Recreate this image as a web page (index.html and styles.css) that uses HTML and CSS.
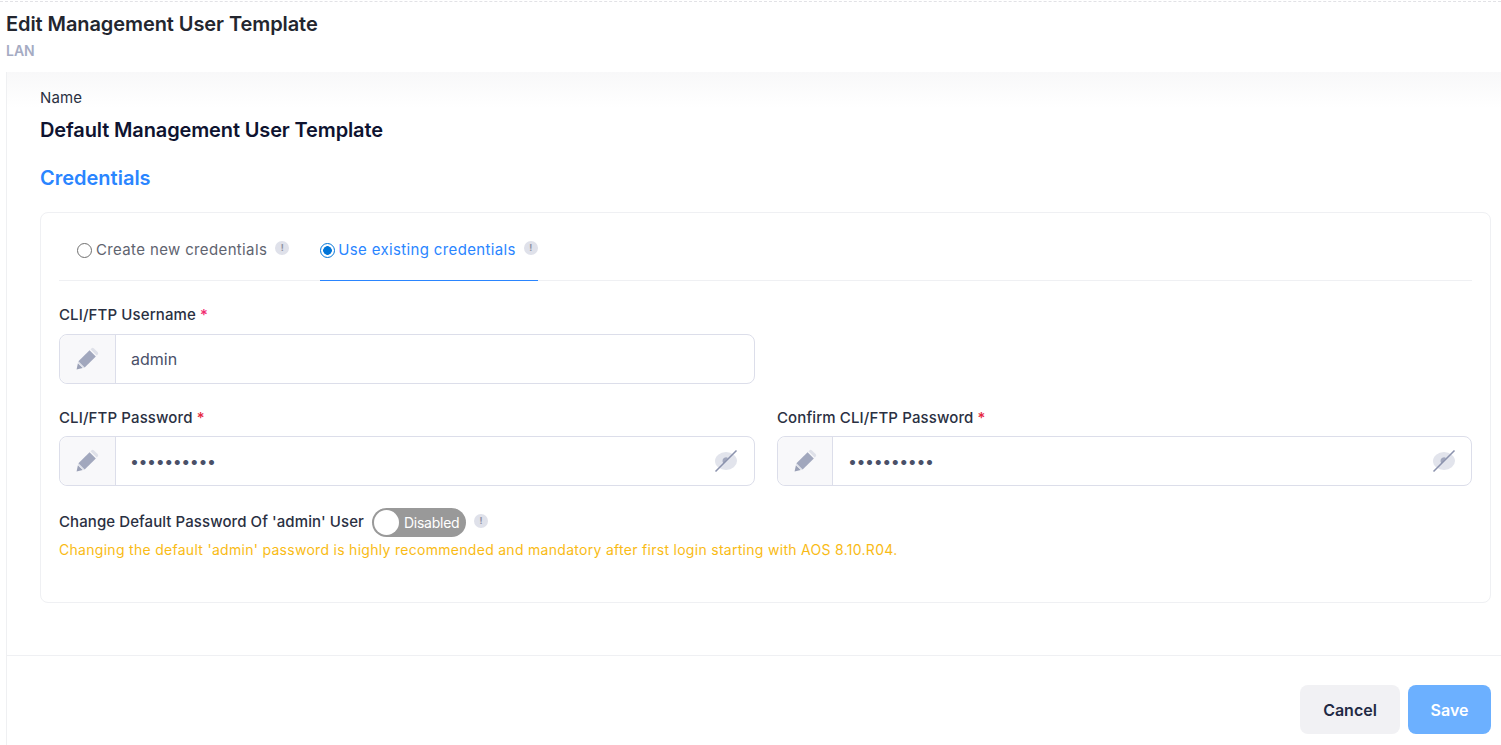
FILE: index.html
```html
<!DOCTYPE html>
<html lang="en">
<head>
<meta charset="utf-8">
<title>Edit Management User Template</title>
<link rel="stylesheet" href="styles.css">
</head>
<body>
<header class="page-head">
  <h1 class="page-title">Edit Management User Template</h1>
  <div class="page-sub">LAN</div>
</header>
<main class="panel">
  <div class="content">
    <div class="name-label">Name</div>
    <div class="name-value">Default Management User Template</div>
    <h2 class="section-title">Credentials</h2>
    <section class="card">
      <div class="tabs">
        <div class="tab">
          <span class="radio"></span><span class="tab-text">Create new credentials</span>
          <span class="info">!</span>
        </div>
        <div class="tab tab-active">
          <span class="radio radio-on"></span><span class="tab-text">Use existing credentials</span>
          <span class="info">!</span>
        </div>
      </div>
      <div class="field field-user">
        <label class="label">CLI/FTP Username <span class="req req-pink">*</span></label>
        <div class="input">
          <span class="addon"><svg class="pencil" viewBox="0 0 24 24"><path class="p-tip" d="M1.500 22.500l1.300-6 4.700 4.700z"/><path class="p-band" d="M2.800 16.500l.5-1.800 6 6-1.800.5z"/><path class="p-body" d="M3.300 14.700L14 4l6 6L9.300 20.700z"/><path class="p-end" d="M14.800 3.200l.9-.9a1.800 1.800 0 0 1 2.500 0l3.500 3.500a1.800 1.800 0 0 1 0 2.500l-.9.9z"/></svg></span>
          <span class="value">admin</span>
        </div>
      </div>
      <div class="row">
        <div class="field field-left">
          <label class="label">CLI/FTP Password <span class="req">*</span></label>
          <div class="input input-pass">
            <span class="addon"><svg class="pencil" viewBox="0 0 24 24"><path class="p-tip" d="M1.500 22.500l1.300-6 4.700 4.700z"/><path class="p-band" d="M2.800 16.500l.5-1.800 6 6-1.800.5z"/><path class="p-body" d="M3.300 14.700L14 4l6 6L9.300 20.700z"/><path class="p-end" d="M14.800 3.200l.9-.9a1.800 1.800 0 0 1 2.500 0l3.500 3.500a1.800 1.800 0 0 1 0 2.500l-.9.9z"/></svg></span>
            <span class="value dots">••••••••••</span>
            <svg class="eye" viewBox="0 0 24 24"><ellipse class="e-fill" cx="12" cy="12" rx="11" ry="9"/><path class="e-pupil" d="M8.500 12a3.500 3.500 0 0 1 5.500-3L9.500 14.500a3.500 3.500 0 0 1-1-2.500z"/><path class="e-line" d="M1.500 22.500L22.500 1.500"/></svg>
          </div>
        </div>
        <div class="field field-right">
          <label class="label">Confirm CLI/FTP Password <span class="req">*</span></label>
          <div class="input input-pass">
            <span class="addon"><svg class="pencil" viewBox="0 0 24 24"><path class="p-tip" d="M1.500 22.500l1.300-6 4.700 4.700z"/><path class="p-band" d="M2.800 16.500l.5-1.800 6 6-1.800.5z"/><path class="p-body" d="M3.300 14.700L14 4l6 6L9.300 20.700z"/><path class="p-end" d="M14.800 3.200l.9-.9a1.800 1.800 0 0 1 2.500 0l3.500 3.500a1.800 1.800 0 0 1 0 2.500l-.9.9z"/></svg></span>
            <span class="value dots">••••••••••</span>
            <svg class="eye" viewBox="0 0 24 24"><ellipse class="e-fill" cx="12" cy="12" rx="11" ry="9"/><path class="e-pupil" d="M8.500 12a3.500 3.500 0 0 1 5.500-3L9.500 14.500a3.500 3.500 0 0 1-1-2.500z"/><path class="e-line" d="M1.500 22.500L22.500 1.500"/></svg>
          </div>
        </div>
      </div>
      <div class="toggle-row">
        <span class="toggle-label">Change Default Password Of 'admin' User</span>
        <span class="toggle"><span class="knob"></span><span class="toggle-text">Disabled</span></span>
        <span class="info info-toggle">!</span>
      </div>
      <p class="warning">Changing the default 'admin' password is highly recommended and mandatory after first login starting with AOS 8.10.R04.</p>
    </section>
  </div>
  <footer class="actions">
    <button class="btn btn-cancel">Cancel</button>
    <button class="btn btn-save">Save</button>
  </footer>
</main>
</body>
</html>
```
FILE: styles.css
```css
* { box-sizing: border-box; }
html, body { margin: 0; padding: 0; height: 100%; overflow: hidden; }
body { font-family: Inter, "Liberation Sans", sans-serif; background: #fff; color: #1f2433; }

.page-head { height: 71px; padding: 12px 6px 0; border-top: 1px dashed #e2e2e6; margin-top: 1px; }
.page-title { margin: 0; font-size: 20px; line-height: 20px; font-weight: 600; letter-spacing: -.08px; color: #23262f; }
.page-sub { margin-top: 9px; font-size: 14px; line-height: 16px; font-weight: 600; color: #a5abc3; }

.panel { margin-left: 6px; height: 673px; border-left: 1px solid #eff0f2; display: flex; flex-direction: column;
  background: linear-gradient(#f8f8f9, #fff 36px); background-repeat: no-repeat; }
.content { padding: 16px 10px 0 33px; height: 584px; border-bottom: 1px solid #eff0f3; }
.name-label { font-size: 15px; line-height: 20px; color: #2a3042; letter-spacing: .1px; }
.name-value { margin-top: 10px; font-size: 20px; line-height: 24px; font-weight: 600; letter-spacing: -.13px; color: #0e1330; }
.section-title { margin: 24px 0 0; font-size: 20px; line-height: 24px; font-weight: 600; color: #2a85ff; }

.card { margin-top: 22px; height: 391px; border: 1px solid #eff0f3; border-radius: 8px; padding: 0 18px; background: #fff; }
.tabs { display: flex; height: 68px; border-bottom: 1px solid #eff0f3; padding-left: 18px; gap: 31px; }
.tab { display: flex; align-items: flex-start; padding-top: 27px; height: 68px; font-size: 15px; line-height: 20px; letter-spacing: .36px; color: #5f6470; }
.tab-active { color: #2a85ff; border-bottom: 1px solid #2a85ff; }
.tab-text { margin-left: 4px; }
.tab-active .tab-text { margin-left: 3px; }
.radio { width: 15px; height: 15px; border: 1px solid #6f6f6f; border-radius: 50%; margin-top: 3px; background: #fff; flex: none; }
.radio-on { border: 1.5px solid #0075d9; background: radial-gradient(circle, #0075d9 0 4px, #fff 4.600px); }
.info { display: inline-flex; align-items: center; justify-content: center; width: 14px; height: 14px; border-radius: 50%;
  background: #dfe1ea; color: #8f93a3; font-size: 9px; font-weight: 700; margin: 1px 0 0 8px; flex: none; letter-spacing: 0; }

.field { flex: 1 1 0; min-width: 0; }
.field-user { width: 696px; margin-top: 24px; }
.field-left { width: 696px; flex: none; }
.label { display: block; font-size: 15px; line-height: 20px; font-weight: 500; color: #2a3042; letter-spacing: .12px; }
.req { color: #e5273f; }
.req-pink { color: #f1296f; }
.input { display: flex; align-items: center; height: 50px; margin-top: 9px; border: 1px solid #dcdeea; border-radius: 8px; background: #fff; }
.input-pass { margin-top: 8px; }
.addon { display: flex; align-items: center; justify-content: center; width: 56px; height: 100%; flex: none; background: #f8f8fa;
  border-right: 1px solid #dcdeea; border-radius: 8px 0 0 8px; }
.field-right .addon { width: 55px; }
.pencil { width: 25px; height: 25px; margin-top: -2px; }
.p-tip { fill: #9aa0b6; }
.p-band { fill: #dfe1e9; }
.p-body { fill: #a1a7bd; }
.p-end { fill: #dfe1e9; }
.value { margin-left: 15px; flex: 1; font-size: 16px; line-height: 22px; color: #4a5068; }
.dots { margin-left: 14px; letter-spacing: -.45px; }
.field-right .dots { margin-left: 15px; }
.eye { width: 24px; height: 24px; margin-right: 16px; flex: none; }
.field-right .eye { margin-right: 15px; }
.e-fill { fill: #e2e4ec; }
.e-pupil { fill: #a1a7bd; }
.e-line { stroke: #8b92ad; stroke-width: 1.600; fill: none; }

.row { display: flex; gap: 22px; margin-top: 24px; }
.toggle-row { display: flex; align-items: center; margin-top: 21px; height: 30px; }
.toggle-label { font-size: 15px; font-weight: 500; color: #2a3042; letter-spacing: .08px; margin-top: -1px; }
.toggle { display: flex; align-items: center; width: 94px; height: 29px; margin-left: 8px; border-radius: 15px; background: #999; padding: 2px; }
.knob { width: 25px; height: 25px; border-radius: 50%; background: #fff; flex: none; }
.toggle-text { margin-left: 5px; font-size: 14px; letter-spacing: -.25px; color: #fff; }
.info-toggle { margin: -3px 0 0 8px; }
.warning { margin: 3px 0 0; font-size: 14px; line-height: 20px; letter-spacing: .29px; color: #f9bb15; }

.actions { display: flex; justify-content: flex-end; gap: 8px; padding: 29px 10px 0 0; }
.btn { height: 49px; border: 0; border-radius: 8px; font: 600 16px Inter, "Liberation Sans", sans-serif; }
.btn-cancel { width: 100px; background: #f1f1f4; color: #1f2a44; }
.btn-save { width: 83px; background: #6cb0ff; color: #fff; }
```
